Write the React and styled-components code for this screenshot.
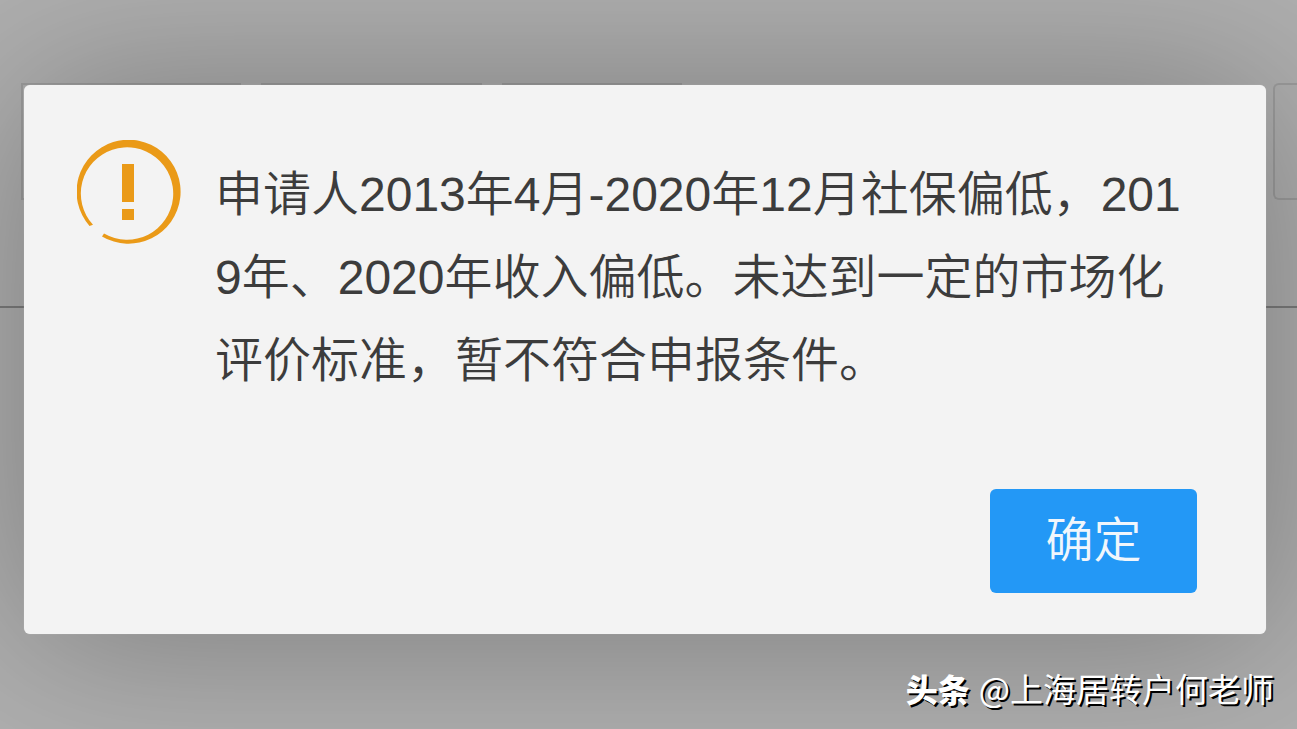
import React from "react";
import styled, { createGlobalStyle } from "styled-components";

const GlobalStyle = createGlobalStyle`
  * { box-sizing: border-box; }
  html, body { margin: 0; min-height: 100%; background: #afafaf; }
  body {
    font-family: "Liberation Sans", "Noto Sans CJK SC", sans-serif;
    font-weight: 350;
    overflow: hidden;
  }
`;

const Page = styled.div`
  position: relative;
  min-height: 100vh;
`;

const FilterBar = styled.div`
  display: flex;
  gap: 20px;
  height: 308px;
  padding: 83px 0 0 21px;
  border-bottom: 2px solid #7c7c7c;
`;

const Field = styled.div`
  width: ${(p) => p.$width}px;
  height: 117px;
  flex: none;
  border: 2px solid #9c9c9c;
`;

const EdgeField = styled(Field)`
  margin-left: auto;
  border-right: 0;
  border-radius: 6px 0 0 6px;
`;

const Overlay = styled.div`
  position: absolute;
  inset: 0;
  padding: 85px 31px 0 24px;
`;

const Dialog = styled.section`
  display: flex;
  flex-direction: column;
  padding: 55px 69px 41px 53px;
  border-radius: 6px;
  background: #f3f3f3;
  box-shadow: 3px 3px 172px rgba(0, 0, 0, 0.3), 0 0 1px rgba(255, 255, 255, 0.6);
`;

const Body = styled.div`
  display: flex;
  align-items: flex-start;
  gap: 34px;
`;

const Icon = styled.svg`
  width: 104px;
  height: 104px;
  flex: none;
`;

const Message = styled.p`
  flex: 1;
  margin: 0;
  padding-top: 13px;
  color: #3c3c3c;
  font-size: 48px;
  line-height: 83px;
  word-break: break-all;
`;

const Footer = styled.footer`
  display: flex;
  justify-content: flex-end;
  padding-top: 87px;
`;

const ConfirmButton = styled.button`
  width: 207px;
  height: 104px;
  padding: 0;
  border: 0;
  border-radius: 6px;
  background: #2398f6;
  color: #f0f6fc;
  font: inherit;
  font-size: 48px;
  line-height: 104px;
`;

const Credit = styled.div`
  position: absolute;
  right: 23px;
  bottom: 17px;
  display: flex;
  align-items: center;
  gap: 9px;
  color: #fff;
  font-family: "Noto Sans CJK SC", sans-serif;
  font-size: 33px;
  font-weight: 400;
  line-height: 48px;
  text-shadow: 2px 2px 0 #000;
`;

const Brand = styled.strong`
  font-size: 32px;
  font-weight: 900;
`;

function WarningIcon() {
  return (
    <Icon viewBox="0 0 104 104" fill="none" aria-hidden="true">
      <path
        fill="#ea9a18"
        d="M25 96.4 A52 52 0 1 0 12.5 86 L16 84.8 A46.2 46.2 0 1 1 27 93.6 Z"
      />
      <path fill="#ea9a18" d="M45 24H57V62H45Z M45 69H57V80H45Z" />
    </Icon>
  );
}

export default function App() {
  return (
    <Page>
      <GlobalStyle />
      <FilterBar>
        <Field $width={220} />
        <Field $width={221} />
        <Field $width={180} />
        <EdgeField $width={24} />
      </FilterBar>
      <Overlay>
        <Dialog role="alertdialog" aria-describedby="message">
          <Body>
            <WarningIcon />
            <Message id="message">
              申请人2013年4月-2020年12月社保偏低，2019年、2020年收入偏低。未达到一定的市场化评价标准，暂不符合申报条件。
            </Message>
          </Body>
          <Footer>
            <ConfirmButton type="button">确定</ConfirmButton>
          </Footer>
        </Dialog>
      </Overlay>
      <Credit>
        <Brand>头条</Brand>
        <span>@上海居转户何老师</span>
      </Credit>
    </Page>
  );
}
